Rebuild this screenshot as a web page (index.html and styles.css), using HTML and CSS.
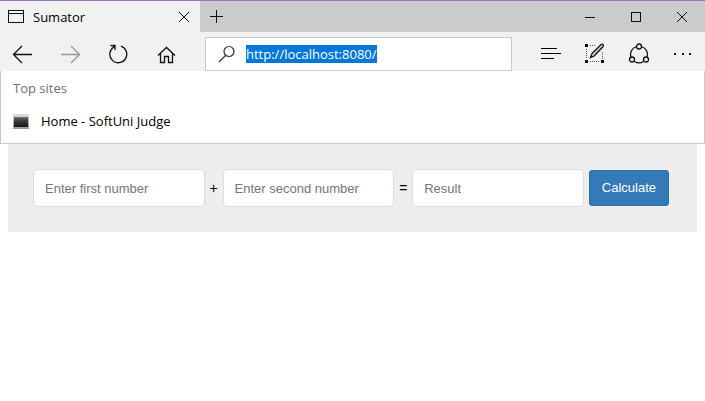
FILE: index.html
```html
<!DOCTYPE html>
<html lang="en">
<head>
  <meta charset="utf-8">
  <title>Sumator</title>
  <link rel="stylesheet" href="styles.css">
</head>
<body>
  <header class="browser">
    <div class="tabbar">
      <div class="tab">
        <svg class="tab-icon" viewBox="0 0 16 14" shape-rendering="crispEdges"><path d="M.5 .5h15v12H.5zM1 3.5h14"/></svg>
        <span class="tab-title">Sumator</span>
        <button class="tab-close" aria-label="Close tab"><svg viewBox="0 0 12 12"><path d="M1 1l10 10M11 1L1 11"/></svg></button>
      </div>
      <button class="new-tab" aria-label="New tab"><svg viewBox="0 0 13 13" shape-rendering="crispEdges"><path d="M6.500 0v13M0 6.500h13"/></svg></button>
      <div class="window-controls">
        <button aria-label="Minimize"><svg viewBox="0 0 12 12" shape-rendering="crispEdges"><path d="M1 6.500h10"/></svg></button>
        <button aria-label="Maximize"><svg viewBox="0 0 12 12" shape-rendering="crispEdges"><path d="M1.500 1.500h9v9h-9z"/></svg></button>
        <button aria-label="Close"><svg viewBox="0 0 12 12"><path d="M1 1l10 10M11 1L1 11"/></svg></button>
      </div>
    </div>
    <div class="toolbar">
      <nav class="tools nav-tools">
        <button aria-label="Back"><svg viewBox="0 0 24 24"><path d="M21 12.500H2.500M11 4l-8.500 8.500L11 21"/></svg></button>
        <button aria-label="Forward" disabled><svg viewBox="0 0 24 24"><path d="M2 12.500h18.500M12 4l8.500 8.500L12 21"/></svg></button>
        <button aria-label="Refresh"><svg viewBox="0 0 24 24"><path d="M14 4.200A8.500 8.500 0 1 1 6.500 5.200M3.500 3.500h4.500v4.500M8 3.500l-3 3"/></svg></button>
        <button aria-label="Home"><svg viewBox="0 0 24 24"><path d="M3 13.500l8.500-8 8.500 8M5.500 11.500v9h4v-6h4v6h4v-9"/></svg></button>
      </nav>
      <label class="address">
        <svg viewBox="0 0 18 18"><circle cx="11" cy="6.500" r="5"/><path d="M7.500 10.500L1 17"/></svg>
        <input id="url" type="text" value="http://localhost:8080/" aria-label="Address" spellcheck="false">
      </label>
      <div class="tools page-tools">
        <button aria-label="Hub"><svg class="lines" viewBox="0 0 24 24" shape-rendering="crispEdges"><path d="M2 6.500h16M2 11.500h20M2 16.500h13"/></svg></button>
        <button aria-label="Make a web note"><svg viewBox="0 0 24 24"><path class="dots" d="M7 3.500h6M3.500 7v10M7 19.500h10M19.500 10v7"/><path class="solid" d="M2 2h3v3H2zM2 18h3v3H2zM18 18h3v3h-3z"/><path class="pen" d="M7.500 15.500l1.500-4 9-9q1.500-.8 2.200 .2t-.5 2.300l-8.500 9z"/></svg></button>
        <button aria-label="Share"><svg viewBox="0 0 24 24"><path d="M9.500 4.500a8.500 8.500 0 0 0-5.500 11M14.500 4.500a8.500 8.500 0 0 1 5.500 11M7.500 19.500a8.500 8.500 0 0 0 9 0"/><circle cx="12" cy="4.500" r="2.500"/><circle cx="5" cy="17.500" r="2.500"/><circle cx="19" cy="17.500" r="2.500"/></svg></button>
        <button aria-label="More"><svg viewBox="0 0 24 24"><path class="solid" d="M3 11h2v2H3zM11 11h2v2h-2zM18 11h2v2h-2z"/></svg></button>
      </div>
    </div>
    <section class="suggestions">
      <h2>Top sites</h2>
      <a href="#">
        <svg viewBox="0 0 16 16"><defs><linearGradient id="screen" x2="0" y2="1"><stop offset="0" stop-color="#777"/><stop offset=".3" stop-color="#444"/><stop offset="1" stop-color="#151515"/></linearGradient><linearGradient id="frame" x2="0" y2="1"><stop offset="0" stop-color="#ddd"/><stop offset="1" stop-color="#999"/></linearGradient></defs><path fill="url(#frame)" d="M0 1h16v15H0z"/><path fill="url(#screen)" d="M1 4h14v10H1z"/></svg>
        <span>Home - SoftUni Judge</span>
      </a>
    </section>
  </header>
  <main>
    <form class="sum-form">
      <input type="text" placeholder="Enter first number" aria-label="First number">
      <span>+</span>
      <input type="text" placeholder="Enter second number" aria-label="Second number">
      <span>=</span>
      <input type="text" placeholder="Result" aria-label="Result">
      <button type="button">Calculate</button>
    </form>
  </main>
  <script src="script.js"></script>
</body>
</html>
```
FILE: styles.css
```css
* {
  box-sizing: border-box;
}

body {
  margin: 0;
  background: #fff;
  color: #000;
  font: 13px/18px "Open Sans", "Noto Sans", sans-serif;
}

button,
input {
  font: inherit;
}

svg {
  display: block;
  flex: none;
  fill: none;
  stroke: #111;
}

.browser {
  border-top: 1px solid #9b79b9;
  background: #f1f1f1;
}

.browser button {
  display: flex;
  align-items: center;
  justify-content: center;
  padding: 0;
  border: 0;
  background: none;
}

.tabbar {
  display: flex;
  height: 31px;
  background: #cbcbcb;
}

.tab {
  display: flex;
  align-items: center;
  width: 200px;
  padding: 0 10px 0 8px;
  background: #f1f1f1;
}

.tab-icon {
  width: 16px;
  height: 14px;
}

.tab-title {
  flex: 1;
  margin-left: 9px;
}

.tab-close svg,
.window-controls svg {
  width: 12px;
  height: 12px;
}

.new-tab {
  width: 33px;
}

.new-tab svg {
  width: 13px;
  height: 13px;
}

.window-controls {
  display: flex;
  margin-left: auto;
}

.window-controls button {
  width: 46px;
}

.toolbar {
  display: flex;
  align-items: center;
  padding: 5px 10px 0 11px;
}

.tools {
  display: flex;
}

.tools svg {
  width: 24px;
  height: 24px;
  stroke-width: 1.3;
}

.tools .lines {
  stroke-width: 1;
  stroke: #000;
}

.tools button:disabled {
  opacity: .4;
}

.nav-tools {
  gap: 24px;
}

.page-tools {
  gap: 20px;
}

.tools .dots {
  stroke: #555;
  stroke-width: 1;
  stroke-dasharray: 1 1;
}

.tools .solid {
  fill: #111;
  stroke: none;
}

.tools .pen {
  fill: #ccc;
}

.address {
  display: flex;
  align-items: center;
  flex: 1;
  height: 34px;
  margin: 0 27px 0 26px;
  padding-left: 12px;
  border: 1px solid #c8c8c8;
  background: #fff;
}

.address svg {
  width: 18px;
  height: 18px;
  stroke: #333;
  stroke-width: 1.2;
}

.address input {
  flex: 1;
  min-width: 0;
  margin-left: 10px;
  padding: 0;
  border: 0;
  outline: 0;
  background: none;
}

.address input::selection {
  background: #0078d7;
  color: #fff;
}

.suggestions {
  padding: 8px 12px 13px;
  border: 1px solid #c8c8c8;
  border-top: 0;
  background: #fff;
}

.suggestions h2 {
  margin: 0 0 15px;
  color: #707070;
  font-size: 13px;
  font-weight: 400;
}

.suggestions a {
  display: flex;
  align-items: center;
  gap: 12px;
  color: #000;
  text-decoration: none;
}

.suggestions svg {
  width: 16px;
  height: 16px;
  stroke: none;
}

main {
  padding: 0 8px;
}

.sum-form {
  display: flex;
  align-items: center;
  gap: 5px;
  padding: 25px 28px 25px 25px;
  background: #eee;
  font-family: "Liberation Sans", Arial, sans-serif;
}

.sum-form span {
  width: 8px;
  font-size: 14px;
  text-align: center;
}

.sum-form input {
  flex: 1;
  min-width: 0;
  height: 38px;
  padding: 0 11px;
  border: 1px solid #ddd;
  border-radius: 4px;
  background: #fff;
}

.sum-form input::placeholder {
  color: #757575;
}

.sum-form button {
  height: 36px;
  padding: 0 12px;
  border: 1px solid #2e6da4;
  border-radius: 3px;
  background: #337ab7;
  color: #fff;
}
```
FILE: script.js
```js
// Start with the whole address selected, ready to be replaced.
const url = document.getElementById("url");
url.focus();
url.select();
```
